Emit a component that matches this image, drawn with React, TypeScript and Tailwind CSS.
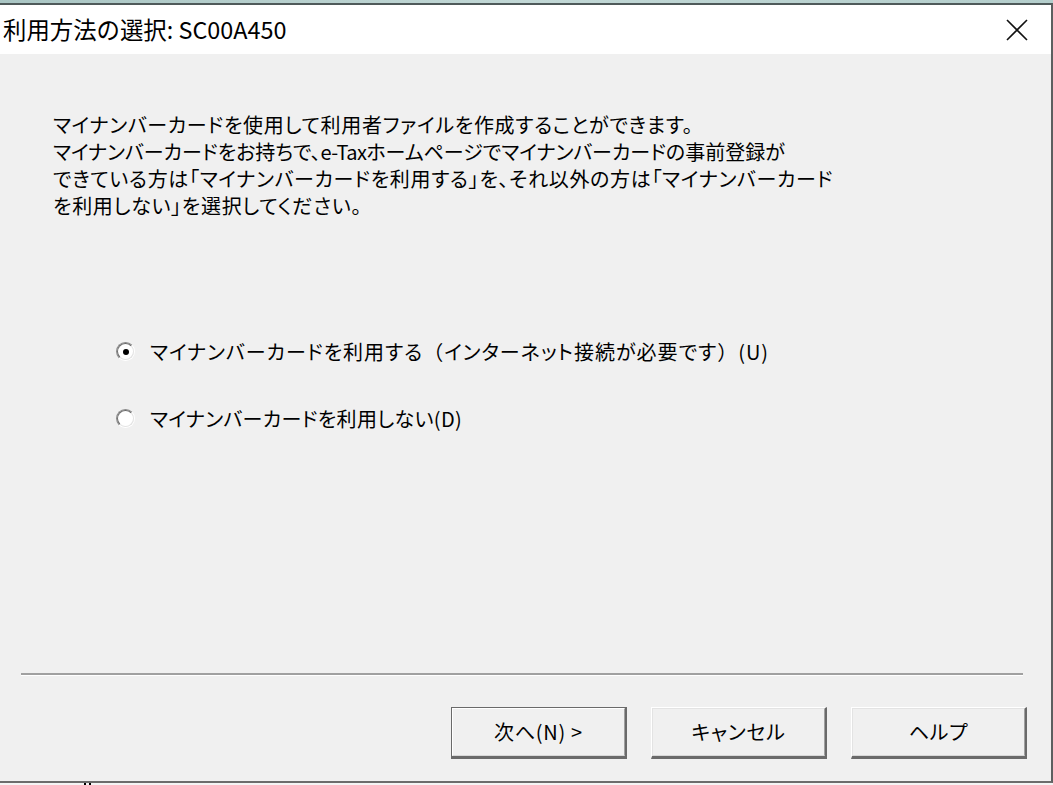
import React from "react";

const jp = { fontFamily: '"Noto Sans CJK JP", "Noto Sans", sans-serif' } as React.CSSProperties;
const body = { ...jp, fontFeatureSettings: '"palt"', letterSpacing: "0.7px" } as React.CSSProperties;
const full = { fontFeatureSettings: "normal" } as React.CSSProperties;
const tax = { letterSpacing: "-0.6px" } as React.CSSProperties;

function Radio({ checked }: { checked?: boolean }) {
  return (
    <span className="relative inline-flex h-[19px] w-[19px] shrink-0 items-center justify-center rounded-full border border-t-[#8a8a8a] border-l-[#8a8a8a] border-b-white border-r-white">
      <span className="flex h-[17px] w-[17px] items-center justify-center rounded-full border border-t-[#6a6a6a] border-l-[#6a6a6a] border-b-[#e3e3e3] border-r-[#e3e3e3] bg-white">
        {checked && <span className="h-[6px] w-[6px] rounded-full bg-black" />}
      </span>
    </span>
  );
}

function Btn({ label, def }: { label: string; def?: boolean }) {
  return (
    <div
      className={
        "flex h-[52px] w-[176px] border " +
        (def
          ? "border-[#6a6a6a] border-r-2 border-b-[3px]"
          : "border-t-white border-l-white border-r-[#6a6a6a] border-b-[#6a6a6a] border-r-2 border-b-[3px]")
      }
    >
      <div
        className={
          "flex flex-1 items-center justify-center border bg-[#f0f0f0] text-[20px] text-black " +
          (def
            ? "border-t-white border-l-white border-r-[#a0a0a0] border-b-[#d8d8d8]"
            : "border-t-[#e3e3e3] border-l-[#e3e3e3] border-r-[#a0a0a0] border-b-[#d8d8d8]")
        }
        style={body}
      >
        {label}
      </div>
    </div>
  );
}

export default function App() {
  return (
    <div className="relative flex h-[785px] w-[1053px] flex-col overflow-hidden bg-white">
      <div className="h-[3px] shrink-0 bg-gradient-to-r from-[#aac6c4] via-[#c2d8d6] to-[#b4cecc]" />
      <div className="flex h-[780px] shrink-0 flex-col border-t-2 border-r-2 border-b-2 border-t-[#4f5a5a] border-r-[#5c6060] border-b-[#6c6c6c]">
        <div className="flex h-[49px] shrink-0 items-center justify-between bg-white pl-[3px] pr-[23px]">
          <span className="text-[23.4px] text-black" style={jp}>
            利用方法の選択: SC00A450
          </span>
          <svg width="22" height="22" viewBox="0 0 22 22" className="mt-[1px]">
            <path d="M1 1 L21 21 M21 1 L1 21" stroke="#111" strokeWidth="1.6" />
          </svg>
        </div>
        <div className="flex flex-1 flex-col bg-[#f0f0f0]">
          <div className="pl-[53px] pt-[57px] text-[20px] leading-[27px] text-black" style={body}>
            <div>マイナンバーカードを使用して利用者ファイルを作成することができます。</div>
            <div style={{ letterSpacing: "0px" }}>
              マイナンバーカードをお持ちで、<span style={tax}>e-Tax</span>ホームページでマイナンバーカードの事前登録が
            </div>
            <div>できている方は「マイナンバーカードを利用する」を、それ以外の方は「マイナンバーカード</div>
            <div>を利用しない」を選択してください。</div>
          </div>
          <div
            className="flex flex-col gap-[40px] pl-[116px] pt-[119px] text-[20px] leading-[27px] text-black"
            style={body}
          >
            <div className="flex items-center gap-[15px]">
              <Radio checked />
              <span style={{ letterSpacing: "1px" }}>
                マイナンバーカードを利用する<span style={full}>（</span>インターネット接続が必要です
                <span style={full}>）</span>(U)
              </span>
            </div>
            <div className="flex items-center gap-[15px]">
              <Radio />
              <span style={{ letterSpacing: "0.35px" }}>マイナンバーカードを利用しない(D)</span>
            </div>
          </div>
          <div className="mt-auto">
            <div className="ml-[21px] mr-[28px] h-[3px] border-t-2 border-b border-t-[#a0a0a0] border-b-white" />
            <div className="flex justify-end gap-[24px] pr-[24px] pb-[22px] pt-[31px]">
              <Btn label="次へ(N) >" def />
              <Btn label="キャンセル" />
              <Btn label="ヘルプ" />
            </div>
          </div>
        </div>
      </div>
      <div className="relative h-[2px] shrink-0 bg-[#f4f4f4]">
        <div className="absolute left-[84px] top-0 h-[2px] w-[2px] bg-black" />
        <div className="absolute left-[89px] top-0 h-[2px] w-[2px] bg-black" />
      </div>
    </div>
  );
}
